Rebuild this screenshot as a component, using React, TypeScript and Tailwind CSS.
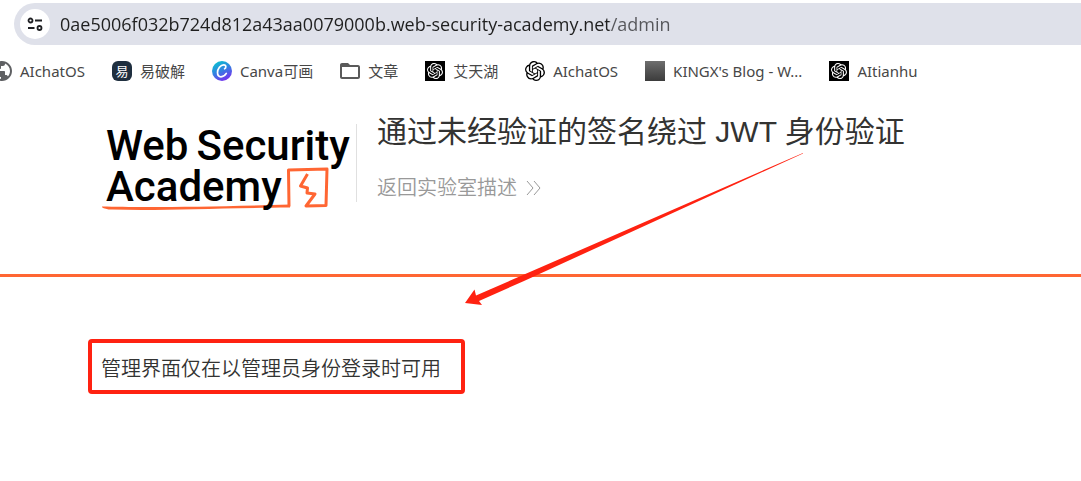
import type { ReactNode } from "react";
import { MdPublic, MdFolderOpen } from "react-icons/md";
import { SiOpenai } from "react-icons/si";

function TuneIcon() {
  return (
    <svg viewBox="0 0 18 18" className="size-[18px]" fill="none" stroke="#1f2023" strokeWidth="1.8">
      <circle cx="4.5" cy="5.5" r="2" />
      <path d="M9 5.5h7M2 13h6.5" />
      <circle cx="13.5" cy="13" r="2" />
    </svg>
  );
}

function CanvaIcon() {
  return (
    <svg viewBox="0 0 20 20" className="size-5">
      <defs>
        <linearGradient id="canva" x1="0.2" y1="0" x2="0.7" y2="1">
          <stop offset="0" stopColor="#08c5cf" />
          <stop offset="0.45" stopColor="#2f86e0" />
          <stop offset="1" stopColor="#7a2cf0" />
        </linearGradient>
      </defs>
      <circle cx="10" cy="10" r="10" fill="url(#canva)" />
      <path
        d="M12.6 7.8c1.5-.6 2-4-.8-4-3.300 0-6.300 4-6.300 7.800 0 2.700 1.500 4.200 3.500 4.200 2.400 0 4.200-1.600 5.300-3.400"
        fill="none"
        stroke="#fff"
        strokeWidth="1.7"
        strokeLinecap="round"
      />
    </svg>
  );
}

function OpenAiTile() {
  return (
    <span className="flex size-5 items-center justify-center bg-black text-[16px] text-white">
      <SiOpenai />
    </span>
  );
}

type Bookmark = { label: string; icon: ReactNode };

const bookmarks: Bookmark[] = [
  { label: "AIchatOS", icon: <MdPublic className="-mx-[2px] size-6 text-[#5f6063]" /> },
  {
    label: "易破解",
    icon: (
      <span className="flex size-5 items-center justify-center rounded-md bg-[#1f2f3f] text-[13px] leading-none text-white">
        易
      </span>
    ),
  },
  { label: "Canva可画", icon: <CanvaIcon /> },
  { label: "文章", icon: <MdFolderOpen className="-mx-[2px] size-6 text-[#5a5a5a]" /> },
  { label: "艾天湖", icon: <OpenAiTile /> },
  { label: "AIchatOS", icon: <SiOpenai className="size-5 text-black" /> },
  {
    label: "KINGX's Blog - W...",
    icon: <span className="size-5 bg-linear-to-b from-[#6e6e6e] to-[#3c3c3c]" />,
  },
  { label: "AItianhu", icon: <OpenAiTile /> },
];

function AcademyLogo() {
  return (
    <a
      href="#"
      aria-label="Web Security Academy"
      className="relative block w-[254px] shrink-0 pt-[3px] font-['Roboto',sans-serif] text-[42px] leading-[41px] font-medium text-black"
    >
      <svg viewBox="0 0 254 92" className="absolute top-0 left-0 w-full" fill="none">
        <path
          d="M187 84.500L186.500 48l38.500-1-1 36.500-20 .5 9-12-8-1 .500-5-7-2 7-12"
          stroke="#ff6633"
          strokeWidth="3"
          strokeLinejoin="round"
        />
        <path d="M-1 84.500c40 1 110 .5 189-2v3C110 86 60 89 10 87.500c-6 0-9-1.500-11-3z" fill="#ff6633" />
      </svg>
      <span className="relative flex gap-2 pl-1">
        <span>Web</span>
        <span>Security</span>
      </span>
      <span className="relative block pl-1">Academy</span>
    </a>
  );
}

export default function App() {
  return (
    <div className="relative min-h-screen overflow-hidden bg-white font-['Noto_Sans','Noto_Sans_CJK_SC',sans-serif] text-[#333332]">
      <header>
        <div className="pt-[3px] pl-[14px]">
          <div className="flex h-[42px] items-center gap-[10px] rounded-l-full bg-[#dfe1ea] pl-[6px]">
            <button
              type="button"
              aria-label="查看网站信息"
              className="flex size-[30px] shrink-0 items-center justify-center rounded-full bg-white"
            >
              <TuneIcon />
            </button>
            <input
              type="text"
              aria-label="地址"
              defaultValue="0ae5006f032b724d812a43aa0079000b.web-security-academy.net/admin"
              className="min-w-0 flex-1 bg-[linear-gradient(to_right,#1f1f1f_549px,#55565a_549px)] bg-clip-text font-['Open_Sans',sans-serif] text-[18px] text-transparent caret-black outline-none"
            />
          </div>
        </div>
        <nav className="-ml-2 flex h-[52px] items-center gap-[27px] text-[15px] whitespace-nowrap text-[#474747]">
          {bookmarks.map((b, i) => (
            <a key={i} href="#" className="flex items-center gap-2">
              {b.icon}
              {b.label}
            </a>
          ))}
        </nav>
      </header>

      <section className="flex h-[180px] items-start border-b-3 border-[#ff6633] pt-[25px] pl-[102px]">
        <AcademyLogo />
        <div className="mt-[2px] h-[78px] border-l border-[#e0e0e0] pl-5">
          <h1 className="-mt-3 font-['Liberation_Sans','Noto_Sans_CJK_SC',sans-serif] text-[30px] leading-[40px] font-normal">
            通过未经验证的签名绕过 JWT 身份验证
          </h1>
          <a href="#" className="mt-[18px] flex items-center gap-2 text-[20px] leading-[36px] font-[350] text-[#999]">
            返回实验室描述
            <svg viewBox="0 0 18 18" className="size-[18px]" fill="none" stroke="#999">
              <path d="M2 2l6 7-6 7M9 2l6 7-6 7" />
            </svg>
          </a>
        </div>
      </section>

      <main className="px-[88px] pt-[62px]">
        <p className="w-fit rounded-[4px] border-4 border-[#ff2211] pt-[10px] pr-[20px] pb-[6px] pl-[9px] text-[20px] leading-[31px] font-[350]">
          管理界面仅在以管理员身份登录时可用
        </p>
      </main>

      <svg viewBox="0 0 340 154" className="pointer-events-none absolute top-[152px] left-[464px] w-[340px]">
        <path d="M339 1L12 143.500l-1.500-6L1 151l17 2-3-4L60 129 339 1.500z" fill="#ff2211" />
      </svg>
    </div>
  );
}
